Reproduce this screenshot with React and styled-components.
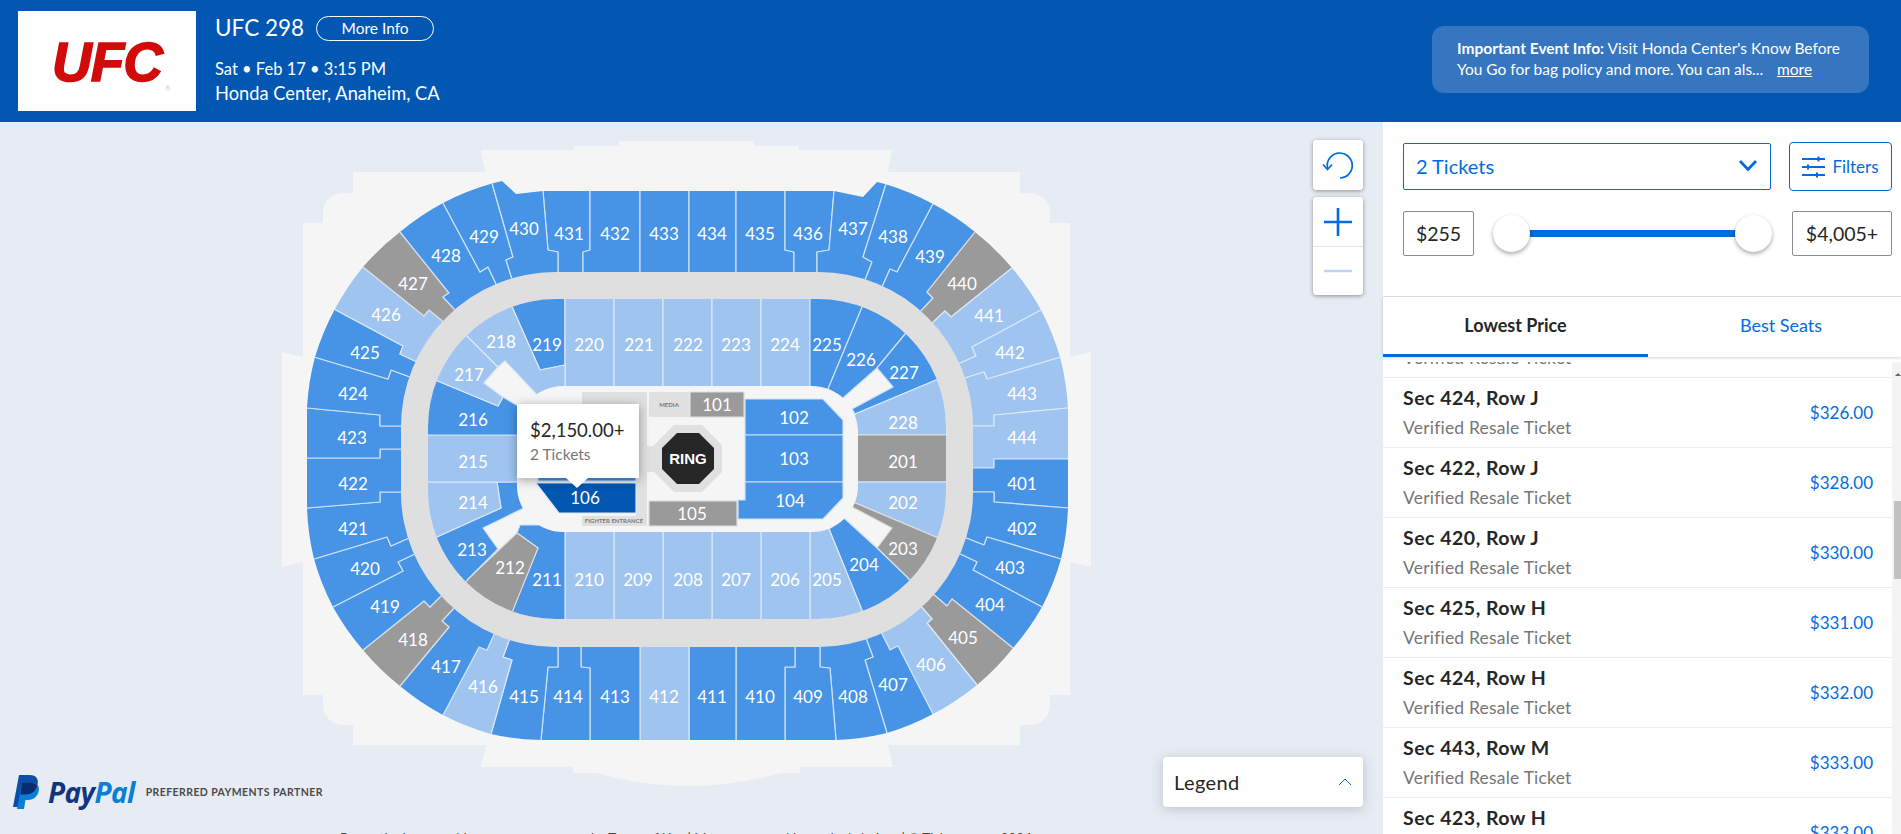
import React from 'react'
import styled, { createGlobalStyle } from 'styled-components'

const GlobalStyle = createGlobalStyle`
  html, body { margin: 0; padding: 0; height: 100%; overflow: hidden; }
  body { font-family: Lato, "Open Sans", sans-serif; color: #262626; }
  * { box-sizing: border-box; }
`

const BLUE = '#026cdf'

const TONES = {
  blue: { fill: '#4793e6', line: '#cfe1f7' },
  light: { fill: '#9fc4ef', line: '#dbe8f8' },
  grey: { fill: '#9a9a9a', line: '#dddddd' },
  active: { fill: '#0257b3', line: '#dbe8f8' },
}

/* ---------- map data, all in page coordinates ---------- */

const GREY = ['427', '440', '405', '418', '212', '203', '201', '105', '101']
const LIGHT = ['426', '441', '442', '443', '444', '406', '416', '412', '217', '218', '220', '221', '222', '223', '224', '228', '202', '205', '206', '207', '208', '209', '210', '214', '215']
const toneOf = (name) => (name === '106' ? 'active' : GREY.includes(name) ? 'grey' : LIGHT.includes(name) ? 'light' : 'blue')

// borders of the 400 level, clockwise, outer end first
const UPPER_DIVIDERS = [
  ['431', [[543, 191], [548, 250], [558, 252], [558, 272]]],
  ['432', [[590, 191], [590, 250], [583, 252], [583, 272]]],
  ['433', [[640, 191], [640, 272]]],
  ['434', [[689, 191], [689, 272]]],
  ['435', [[736, 191], [736, 272]]],
  ['436', [[785, 191], [785, 250], [794, 252], [794, 272]]],
  ['437', [[834, 191], [829, 250], [817, 252], [817, 272]]],
  ['438', [[886, 184], [863, 257], [872, 262], [865, 280]]],
  ['439', [[933, 204], [897, 272], [890, 269], [882, 287]]],
  ['440', [[975, 232], [927, 292], [933, 298], [919, 313]]],
  ['441', [[1012, 268], [951, 317], [945, 311], [931, 324]]],
  ['442', [[1041, 310], [972, 347], [976, 356], [958, 364]]],
  ['443', [[1061, 357], [987, 379], [984, 372], [965, 378]]],
  ['444', [[1068, 408], [994, 415], [994, 426], [973, 426]]],
  ['401', [[1068, 459], [994, 459], [994, 468], [973, 468]]],
  ['402', [[1068, 508], [994, 502], [994, 492], [973, 492]]],
  ['403', [[1061, 559], [987, 537], [984, 545], [966, 538]]],
  ['404', [[1042, 607], [973, 570], [977, 562], [958, 553]]],
  ['405', [[1013, 648], [952, 599], [947, 606], [932, 593]]],
  ['406', [[977, 685], [927, 623], [932, 619], [919, 604]]],
  ['407', [[933, 714], [898, 646], [890, 650], [881, 632]]],
  ['408', [[887, 733], [865, 660], [873, 657], [866, 638]]],
  ['409', [[836, 740], [830, 668], [820, 667], [820, 647]]],
  ['410', [[785, 740], [785, 667], [795, 667], [795, 647]]],
  ['411', [[736, 740], [736, 647]]],
  ['412', [[689, 740], [689, 647]]],
  ['413', [[640, 740], [640, 647]]],
  ['414', [[590, 740], [590, 668], [581, 667], [581, 647]]],
  ['415', [[541, 740], [548, 667], [558, 667], [558, 647]]],
  ['416', [[491, 734], [512, 660], [503, 657], [510, 638]]],
  ['417', [[443, 715], [479, 647], [487, 650], [495, 632]]],
  ['418', [[400, 686], [449, 627], [442, 621], [456, 606]]],
  ['419', [[363, 650], [424, 601], [430, 607], [444, 593]]],
  ['420', [[333, 607], [403, 571], [398, 562], [417, 553]]],
  ['421', [[314, 559], [387, 537], [391, 546], [409, 538]]],
  ['422', [[307, 508], [380, 502], [380, 492], [401, 492]]],
  ['423', [[307, 458], [380, 458], [380, 449], [401, 449]]],
  ['424', [[307, 408], [380, 415], [380, 426], [401, 426]]],
  ['425', [[314, 357], [388, 379], [391, 370], [410, 377]]],
  ['426', [[334, 309], [403, 346], [400, 354], [417, 362]]],
  ['427', [[363, 267], [424, 316], [429, 310], [445, 323]]],
  ['428', [[400, 232], [449, 293], [443, 297], [457, 312]]],
  ['429', [[443, 203], [480, 272], [488, 267], [497, 286]]],
  ['430', [[492, 183], [513, 257], [506, 260], [512, 279]]],
]

// each divider pushed out past the ring, so the ring clip cuts the curved ends
const stretch = (from, to, by) => {
  const dx = to[0] - from[0]
  const dy = to[1] - from[1]
  const len = Math.hypot(dx, dy)
  return [to[0] + (dx / len) * by, to[1] + (dy / len) * by]
}

const upperSections = UPPER_DIVIDERS.map(([name, line], i) => {
  const next = UPPER_DIVIDERS[(i + 1) % UPPER_DIVIDERS.length][1]
  const withEnds = (l) => [stretch(l[1], l[0], 50), ...l, stretch(l[l.length - 2], l[l.length - 1], 22)]
  return { name, points: [...withEnds(line), ...withEnds(next).reverse()] }
})

const LOWER_SECTIONS = [
  { name: '219', points: [[505, 288], [565, 288], [565, 365], [540, 370], [513, 309]] },
  { name: '220', points: [[565, 288], [614, 288], [614, 395], [565, 395]] },
  { name: '221', points: [[614, 288], [663, 288], [663, 395], [614, 395]] },
  { name: '222', points: [[663, 288], [712, 288], [712, 395], [663, 395]] },
  { name: '223', points: [[712, 288], [761, 288], [761, 395], [712, 395]] },
  { name: '224', points: [[761, 288], [810, 288], [810, 395], [761, 395]] },
  { name: '225', points: [[810, 288], [870, 288], [828, 389], [810, 395]] },
  { name: '226', points: [[870, 288], [925, 310], [877, 368], [843, 398], [828, 389]] },
  { name: '227', points: [[925, 310], [955, 372], [855, 414], [852, 409], [893, 387], [877, 368]] },
  { name: '228', points: [[855, 414], [955, 372], [960, 435], [850, 435]] },
  { name: '201', points: [[850, 435], [960, 435], [960, 482], [850, 482]] },
  { name: '202', points: [[850, 482], [960, 482], [955, 545], [853, 502]] },
  { name: '203', points: [[853, 502], [955, 545], [918, 590], [907, 577], [877, 548], [892, 528], [852, 507]] },
  { name: '204', points: [[844, 518], [877, 548], [907, 577], [918, 590], [866, 620], [829, 529]] },
  { name: '205', points: [[810, 525], [829, 529], [866, 620], [810, 630]] },
  { name: '206', points: [[761, 525], [810, 525], [810, 630], [761, 630]] },
  { name: '207', points: [[712, 525], [761, 525], [761, 630], [712, 630]] },
  { name: '208', points: [[663, 525], [712, 525], [712, 630], [663, 630]] },
  { name: '209', points: [[614, 525], [663, 525], [663, 630], [614, 630]] },
  { name: '210', points: [[565, 525], [614, 525], [614, 630], [565, 630]] },
  { name: '211', points: [[520, 525], [565, 525], [565, 630], [505, 630], [513, 608], [538, 548], [517, 533]] },
  { name: '212', points: [[517, 533], [538, 548], [505, 630], [455, 590], [469, 578]] },
  { name: '213', points: [[425, 542], [439, 536], [501, 508], [497, 482], [525, 482], [526, 507], [483, 528], [498, 549], [469, 578], [450, 600]] },
  { name: '214', points: [[415, 482], [497, 482], [501, 508], [439, 536], [425, 542]] },
  { name: '215', points: [[415, 435], [525, 435], [525, 482], [415, 482]] },
  { name: '216', points: [[415, 435], [425, 376], [440, 382], [498, 406], [503, 397], [525, 410], [525, 435]] },
  { name: '217', points: [[425, 376], [458, 327], [470, 339], [498, 367], [484, 383], [503, 397], [498, 406], [440, 382]] },
  { name: '218', points: [[458, 327], [505, 288], [513, 309], [540, 370], [565, 365], [565, 395], [537, 395], [505, 361], [498, 367]] },
]

const CENTER_SECTIONS = [
  { name: '107', tone: 'blue', points: [[538, 405], [636, 405], [636, 481], [538, 481]] },
  { name: '106', points: [[536, 483], [636, 483], [636, 513], [559, 513]] },
  { name: '101', points: [[690, 392], [744, 392], [744, 417], [690, 417]] },
  { name: '102', points: [[745, 399], [823, 399], [843, 420], [843, 435], [745, 435]] },
  { name: '103', points: [[745, 435], [843, 435], [843, 482], [745, 482]] },
  { name: '104', points: [[745, 482], [843, 482], [843, 498], [823, 519], [738, 519], [738, 500], [745, 500]] },
  { name: '105', points: [[649, 501], [737, 501], [737, 526], [649, 526]] },
]

const LABELS = {
  423: [352, 437], 424: [353, 393], 425: [365, 352], 426: [386, 314], 427: [413, 283], 428: [446, 255], 429: [484, 236], 430: [524, 228], 431: [569, 233], 432: [615, 233], 433: [664, 233],
  434: [712, 233], 435: [760, 233], 436: [808, 233], 437: [853, 228], 438: [893, 236], 439: [930, 256], 440: [962, 283], 441: [989, 315], 442: [1010, 352], 443: [1022, 393], 444: [1022, 437],
  401: [1022, 483], 402: [1022, 528], 403: [1010, 567], 404: [990, 604], 405: [963, 637], 406: [931, 664], 407: [893, 684], 408: [853, 696], 409: [808, 696], 410: [760, 696], 411: [712, 696],
  412: [664, 696], 413: [615, 696], 414: [568, 696], 415: [524, 696], 416: [483, 686], 417: [446, 666], 418: [413, 639], 419: [385, 606], 420: [365, 568], 421: [353, 528], 422: [353, 483],
  216: [473, 419], 217: [469, 374], 218: [501, 341], 219: [547, 344], 220: [589, 344], 221: [639, 344], 222: [688, 344], 223: [736, 344], 224: [785, 344], 225: [827, 344], 226: [861, 359], 227: [904, 372], 228: [903, 422],
  201: [903, 461], 202: [903, 502], 203: [903, 548], 204: [864, 564], 205: [827, 579], 206: [785, 579], 207: [736, 579], 208: [688, 579], 209: [638, 579], 210: [589, 579], 211: [547, 579], 212: [510, 567], 213: [472, 549], 214: [473, 502], 215: [473, 461],
  101: [717, 404], 102: [794, 417], 103: [794, 458], 104: [790, 500], 105: [692, 513], 106: [585, 497],
}

const roundedRect = (x1, y1, x2, y2, r) =>
  `M${x1 + r} ${y1}H${x2 - r}A${r} ${r} 0 0 1 ${x2} ${y1 + r}V${y2 - r}A${r} ${r} 0 0 1 ${x2 - r} ${y2}H${x1 + r}A${r} ${r} 0 0 1 ${x1} ${y2 - r}V${y1 + r}A${r} ${r} 0 0 1 ${x1 + r} ${y1}Z`

const UPPER_OUTLINE = `M543 191L516 194L502 181L492 183.5A250 250 0 0 0 443 203A250 250 0 0 0 400 232A250 250 0 0 0 363 267A250 250 0 0 0 335 309A250 250 0 0 0 315 357A250 250 0 0 0 307 407V508
  A250 250 0 0 0 314 559A250 250 0 0 0 333 607A250 250 0 0 0 363 650A250 250 0 0 0 400 686A250 250 0 0 0 443 715A250 250 0 0 0 491 734A250 250 0 0 0 541 740H836
  A250 250 0 0 0 887 733A250 250 0 0 0 933 714A250 250 0 0 0 977 685A250 250 0 0 0 1013 648A250 250 0 0 0 1042 607A250 250 0 0 0 1061 559A250 250 0 0 0 1068 508V408
  A250 250 0 0 0 1060 357A250 250 0 0 0 1041 310A250 250 0 0 0 1012 268A250 250 0 0 0 975 232A250 250 0 0 0 933 204A250 250 0 0 0 885 184L877 182L863 197L834 191Z`

const VENUE = `M481 150H574V146H619V141H754V146H799V150H892L888 172H1020V193H1030A20 20 0 0 1 1050 213V223H1070V357L1091 352V567L1070 562V695H1050V705A20 20 0 0 1 1030 725H1020V745H888L893 767H800V773H781
  Q687 799 596 773H573V767H481L486 745H353V725H343A20 20 0 0 1 323 705V695H303V562L282 567V352L303 357V223H323V213A20 20 0 0 1 343 193H353V172H485Z`

const CONCOURSE = roundedRect(401, 272, 973, 647, 155)
const LOWER_OUTER = roundedRect(428, 299, 946, 619, 128)
const LOWER_INNER = roundedRect(517, 386, 858, 532, 46)

/* ---------- page ---------- */

const Page = styled.div`
  width: 1901px;
  height: 834px;
  display: flex;
  flex-direction: column;
  overflow: hidden;
  background: #fff;
`

const Header = styled.header`
  height: 122px;
  flex: none;
  display: flex;
  align-items: center;
  justify-content: space-between;
  padding: 0 32px 4px 18px;
  background: #0257b3;
  color: #fff;
`

const EventSide = styled.div`
  display: flex;
  align-items: center;
  gap: 19px;
`

const LogoBox = styled.div`
  position: relative;
  width: 178px;
  height: 100px;
  margin-top: 4px;
  background: #fff;
  display: flex;
  align-items: center;
  justify-content: center;
`

const LogoWord = styled.span`
  font-family: "Liberation Sans", Arial, sans-serif;
  font-size: 55px;
  line-height: 1;
  font-weight: 700;
  font-style: italic;
  color: #d10a0a;
  -webkit-text-stroke: 1.5px #d10a0a;
  letter-spacing: -1px;
  margin-top: 3px;
`

const LogoMark = styled.span`
  position: absolute;
  left: 147px;
  top: 73px;
  font-size: 7px;
  color: #ccc;
`

const EventText = styled.div`
  display: flex;
  flex-direction: column;
  padding-top: 2px;
`

const TitleRow = styled.div`
  display: flex;
  align-items: center;
  gap: 12px;
  margin-bottom: 16px;
`

const EventTitle = styled.h1`
  margin: 0;
  font-size: 22.5px;
  line-height: 26px;
  font-weight: 400;
`

const MoreInfo = styled.button`
  width: 118px;
  height: 25px;
  padding: 0;
  border: 1px solid #fff;
  border-radius: 13px;
  background: transparent;
  color: #fff;
  font: 400 15.5px Lato, sans-serif;
`

const EventLine = styled.div`
  font-size: ${(p) => p.$size}px;
  line-height: 24px;
`

const InfoBox = styled.div`
  width: 437px;
  height: 67px;
  margin-top: 1px;
  padding: 12px 10px 0 25px;
  border-radius: 12px;
  background: #3675c0;
  font-size: 15.5px;
  line-height: 21px;
`

const InfoStrong = styled.strong`
  font-weight: 700;
`

const MoreLink = styled.a`
  margin-left: 14px;
  color: #fff;
  text-decoration: underline;
`

const Body = styled.div`
  flex: 1;
  min-height: 0;
  display: flex;
`

const MapPanel = styled.main`
  position: relative;
  width: 1383px;
  flex: none;
  overflow: hidden;
  background: #e7ebf3;
`

const MapCanvas = styled.svg`
  display: block;
  width: 1383px;
  height: 712px;
`

const Section = styled.polygon`
  fill: ${(p) => TONES[p.$tone].fill};
  stroke: ${(p) => TONES[p.$tone].line};
  stroke-width: 1.2;
  stroke-linejoin: round;
`

const SectionLabel = styled.text`
  font-family: Lato, sans-serif;
  font-size: 17px;
  fill: #fff;
  text-anchor: middle;
  dominant-baseline: central;
`

const TinyLabel = styled.text`
  font-family: Lato, sans-serif;
  font-size: 6px;
  font-weight: 700;
  fill: #777;
  text-anchor: middle;
  dominant-baseline: central;
`

const RingLabel = styled.text`
  font-family: "Liberation Sans", Arial, sans-serif;
  font-size: 15px;
  font-weight: 700;
  fill: #fff;
  text-anchor: middle;
  dominant-baseline: central;
`

const MapTooltip = styled.div`
  position: absolute;
  left: 517px;
  top: 282px;
  width: 122px;
  height: 74px;
  padding: 15px 0 0 13px;
  background: #fff;
  box-shadow: 0 2px 10px rgba(0, 0, 0, 0.35);
  &::after {
    content: "";
    position: absolute;
    left: 49px;
    bottom: -10px;
    border-left: 11px solid transparent;
    border-right: 11px solid transparent;
    border-top: 10px solid #fff;
  }
`

const TooltipPrice = styled.div`
  font-size: 18.5px;
  line-height: 22px;
`

const TooltipCount = styled.div`
  margin-top: 4px;
  font-size: 15.5px;
  line-height: 18px;
  color: #767676;
`

const MapControls = styled.div`
  position: absolute;
  left: 1313px;
  top: 18px;
  display: flex;
  flex-direction: column;
  gap: 7px;
`

const ControlGroup = styled.div`
  width: 50px;
  border-radius: 4px;
  background: #fff;
  box-shadow: 0 1px 4px rgba(0, 0, 0, 0.4);
  overflow: hidden;
`

const ControlButton = styled.button`
  display: flex;
  align-items: center;
  justify-content: center;
  width: 50px;
  height: ${(p) => p.$h}px;
  padding: 0;
  border: 0;
  border-top: ${(p) => (p.$split ? '1px solid #e4e4e4' : '0')};
  background: #fff;
`

const Legend = styled.div`
  position: absolute;
  left: 1163px;
  top: 635px;
  width: 200px;
  height: 50px;
  padding: 0 11px;
  display: flex;
  align-items: center;
  justify-content: space-between;
  border-radius: 4px;
  background: #fff;
  box-shadow: 0 2px 12px rgba(60, 70, 100, 0.25);
  font-size: 20px;
  letter-spacing: 0.4px;
`

const PartnerBadge = styled.div`
  position: absolute;
  left: 12px;
  top: 653px;
  display: flex;
  align-items: center;
`

const PayPalWord = styled.span`
  margin-left: 8px;
  font-family: "Open Sans", sans-serif;
  font-size: 28px;
  line-height: 32px;
  font-weight: 700;
  font-style: italic;
  letter-spacing: -0.6px;
  color: #12357f;
`

const PayPalTail = styled.span`
  color: #0a7fd6;
`

const PartnerText = styled.span`
  margin-left: 11px;
  font-size: 10.5px;
  font-weight: 700;
  letter-spacing: 0.42px;
  color: #4a4a4a;
`

const LegalLine = styled.div`
  position: absolute;
  left: 340px;
  top: 708px;
  width: 700px;
  font-size: 13.300px;
  line-height: 16px;
  white-space: nowrap;
  color: #444;
`

const Sidebar = styled.aside`
  flex: 1;
  min-width: 0;
  display: flex;
  flex-direction: column;
  background: #fff;
`

const FilterArea = styled.div`
  height: 175px;
  flex: none;
  padding: 20px 9px 0 20px;
  border-bottom: 1px solid #e4e4e4;
`

const SelectRow = styled.div`
  display: flex;
  align-items: center;
  gap: 18px;
`

const TicketSelect = styled.div`
  width: 368px;
  height: 47px;
  padding: 0 12px 2px 12px;
  display: flex;
  align-items: center;
  justify-content: space-between;
  border: 1px solid ${BLUE};
  border-radius: 2px;
  color: ${BLUE};
  font-size: 20px;
`

const FiltersButton = styled.button`
  width: 103px;
  height: 49px;
  padding: 0;
  display: flex;
  align-items: center;
  justify-content: center;
  gap: 7px;
  border: 1px solid ${BLUE};
  border-radius: 4px;
  background: #fff;
  color: ${BLUE};
  font: 400 17px Lato, sans-serif;
`

const PriceRow = styled.div`
  margin-top: 20px;
  display: flex;
  align-items: center;
`

const PriceBox = styled.div`
  width: ${(p) => p.$w}px;
  height: 45px;
  flex: none;
  display: flex;
  align-items: center;
  justify-content: center;
  border: 1px solid #8c8c8c;
  border-radius: 2px;
  font-size: 19.5px;
`

const SliderTrack = styled.div`
  position: relative;
  width: 243px;
  height: 7px;
  margin: 0 38px 0 37px;
  background: #026cdf;
`

const SliderThumb = styled.span`
  position: absolute;
  top: -15px;
  ${(p) => (p.$end ? 'right: -18px;' : 'left: -18px;')}
  width: 37px;
  height: 37px;
  border-radius: 50%;
  background: #fff;
  box-shadow: 0 2px 4px rgba(0, 0, 0, 0.35);
`

const Tabs = styled.div`
  height: 60px;
  flex: none;
  display: flex;
  box-shadow: 0 1px 3px rgba(0, 0, 0, 0.18);
  position: relative;
`

const Tab = styled.div`
  width: ${(p) => (p.$active ? '265px' : 'auto')};
  flex: ${(p) => (p.$active ? 'none' : '1')};
  display: flex;
  align-items: center;
  justify-content: center;
  padding: 0 0 2px ${(p) => (p.$active ? '0' : '13px')};
  border-bottom: 3px solid ${(p) => (p.$active ? BLUE : 'transparent')};
  color: ${(p) => (p.$active ? '#262626' : BLUE)};
  font-size: 18px;
  font-weight: ${(p) => (p.$active ? 700 : 400)};
`

const ListArea = styled.div`
  flex: 1;
  min-height: 0;
  margin-top: 5px;
  display: flex;
  overflow: hidden;
`

const ListColumn = styled.div`
  flex: 1;
  min-width: 0;
  margin-top: -54px;
`

const Row = styled.div`
  height: 70px;
  padding: 8px 19px 0 20px;
  display: flex;
  justify-content: space-between;
  border-bottom: 1.5px solid #ececec;
`

const RowTitle = styled.div`
  font-size: 19.5px;
  line-height: 24px;
  font-weight: 700;
  letter-spacing: 0.5px;
`

const RowSub = styled.div`
  margin-top: 7px;
  font-size: 17.5px;
  line-height: 22px;
  letter-spacing: 0.2px;
  color: #767676;
`

const RowPrice = styled.div`
  margin-top: 16px;
  font-size: 17px;
  line-height: 22px;
  color: ${BLUE};
`

const ScrollTrack = styled.div`
  position: relative;
  width: 9px;
  padding: 139px 0 0 2px;
  background: #f3f3f3;
  &::before {
    content: "";
    position: absolute;
    left: 3px;
    top: 11px;
    border-left: 3px solid transparent;
    border-right: 3px solid transparent;
    border-bottom: 3px solid #666;
  }
`

const ScrollThumb = styled.div`
  height: 78px;
  background: #c1c1c1;
`

const ROWS = [
  ['Sec 426, Row K', '$325.00'],
  ['Sec 424, Row J', '$326.00'],
  ['Sec 422, Row J', '$328.00'],
  ['Sec 420, Row J', '$330.00'],
  ['Sec 425, Row H', '$331.00'],
  ['Sec 424, Row H', '$332.00'],
  ['Sec 443, Row M', '$333.00'],
  ['Sec 423, Row H', '$333.00'],
]

function VenueMap() {
  return (
    <MapCanvas viewBox="0 122 1383 712">
      <defs>
        <clipPath id="upper-ring">
          <path clipRule="evenodd" d={`${UPPER_OUTLINE}${CONCOURSE}`} />
        </clipPath>
        <clipPath id="lower-ring">
          <path clipRule="evenodd" d={`${LOWER_OUTER}${LOWER_INNER}`} />
        </clipPath>
      </defs>

      <path d={VENUE} fill="#f5f5f5" />
      <path d={CONCOURSE} fill="#dfdfdf" />
      <path d={LOWER_OUTER} fill="#f5f5f5" />

      <g clipPath="url(#upper-ring)">
        {upperSections.map((s) => (
          <Section key={s.name} $tone={toneOf(s.name)} points={s.points.join(' ')} />
        ))}
      </g>
      <g clipPath="url(#lower-ring)">
        {LOWER_SECTIONS.map((s) => (
          <Section key={s.name} $tone={toneOf(s.name)} points={s.points.join(' ')} />
        ))}
      </g>

      {/* floor */}
      <path d="M582 392H647V526H582V516H636V405H582Z" fill="#e0e0e0" />
      <rect x="649" y="392" width="40" height="25" fill="#e0e0e0" />
      <rect x="647" y="446" width="18" height="26" fill="#e0e0e0" />
      <polygon points="674,425 702,425 722,445 722,472 702,492 674,492 654,472 654,445" fill="#e0e0e0" />
      <polygon points="677,433 699,433 714,448 714,469 699,484 677,484 662,469 662,448" fill="#262626" />
      {CENTER_SECTIONS.map((s) => (
        <Section key={s.name} $tone={s.tone || toneOf(s.name)} points={s.points.join(' ')} />
      ))}

      {Object.entries(LABELS).map(([name, [x, y]]) => (
        <SectionLabel key={name} x={x} y={y}>{name}</SectionLabel>
      ))}
      <TinyLabel x="669" y="404.5">MEDIA</TinyLabel>
      <TinyLabel x="614" y="520.5">FIGHTER ENTRANCE</TinyLabel>
      <RingLabel x="688" y="458.5">RING</RingLabel>
    </MapCanvas>
  )
}

function PayPalMark() {
  return (
    <svg width="28" height="34" viewBox="0 0 28 34">
      <path d="M7 1H18C24 1 27 5 25.500 11C24 17 20 20 14 20H10L8 33H1Z" fill="#0a4ea8" transform="translate(0 -1)" />
      <path d="M10 8H20C26 8 28 12 26.500 17C25 22 21 25 16 25H13.500L12 34H5Z" fill="#0a7fd6" />
      <path d="M10 8H20C22 8 24 9 25 10.500C24 16 20 19.500 14 19.500H8.500Z" fill="#0b2a70" />
    </svg>
  )
}

export default function App() {
  return (
    <Page>
      <GlobalStyle />

      <Header>
        <EventSide>
          <LogoBox>
            <LogoWord>UFC</LogoWord>
            <LogoMark>®</LogoMark>
          </LogoBox>
          <EventText>
            <TitleRow>
              <EventTitle>UFC 298</EventTitle>
              <MoreInfo>More Info</MoreInfo>
            </TitleRow>
            <EventLine $size={16.5}>Sat • Feb 17 • 3:15 PM</EventLine>
            <EventLine $size={18.3}>Honda Center, Anaheim, CA</EventLine>
          </EventText>
        </EventSide>
        <InfoBox>
          <InfoStrong>Important Event Info:</InfoStrong> Visit Honda Center's Know Before You Go for bag policy and more. You can als...
          <MoreLink>more</MoreLink>
        </InfoBox>
      </Header>

      <Body>
        <MapPanel>
          <VenueMap />

          <MapTooltip>
            <TooltipPrice>$2,150.00+</TooltipPrice>
            <TooltipCount>2 Tickets</TooltipCount>
          </MapTooltip>

          <MapControls>
            <ControlGroup>
              <ControlButton $h={50}>
                <svg width="50" height="50" viewBox="0 0 50 50" fill="none" stroke={BLUE} strokeWidth="1.7">
                  <path d="M27 38A12.500 12.500 0 1 0 14.500 28" />
                  <path d="M10 24.500L14.500 29.500L19 24.500" />
                </svg>
              </ControlButton>
            </ControlGroup>
            <ControlGroup>
              <ControlButton $h={49}>
                <svg width="30" height="30" viewBox="0 0 30 30" fill="none" stroke={BLUE} strokeWidth="2.600">
                  <path d="M1 15H29M15 1V29" />
                </svg>
              </ControlButton>
              <ControlButton $h={49} $split>
                <svg width="30" height="6" viewBox="0 0 30 6" fill="none" stroke="#bcd6f5" strokeWidth="2.600">
                  <path d="M1 3H29" />
                </svg>
              </ControlButton>
            </ControlGroup>
          </MapControls>

          <Legend>
            Legend
            <svg width="14" height="8" viewBox="0 0 14 8" fill="none" stroke={BLUE} strokeWidth="1">
              <path d="M1 7L7 1L13 7" />
            </svg>
          </Legend>

          <PartnerBadge>
            <PayPalMark />
            <PayPalWord>Pay<PayPalTail>Pal</PayPalTail></PayPalWord>
            <PartnerText>PREFERRED PAYMENTS PARTNER</PartnerText>
          </PartnerBadge>

          <LegalLine>By continuing past this page, you agree to the Terms of Use | Manage my cookies and ad choices | © Ticketmaster 2024</LegalLine>
        </MapPanel>

        <Sidebar>
          <FilterArea>
            <SelectRow>
              <TicketSelect>
                2 Tickets
                <svg width="20" height="13" viewBox="0 0 20 13" fill="none" stroke={BLUE} strokeWidth="2.800">
                  <path d="M2 2L10 10.500L18 2" />
                </svg>
              </TicketSelect>
              <FiltersButton>
                <svg width="23" height="23" viewBox="0 0 23 23" fill="none" stroke={BLUE} strokeWidth="1.800">
                  <path d="M0 4H23M0 12H23M0 20H23" />
                  <path d="M16.500 1.500V6.500M6 9.500V14.500M15 17.500V22.500" strokeWidth="2" />
                </svg>
                Filters
              </FiltersButton>
            </SelectRow>
            <PriceRow>
              <PriceBox $w={71}>$255</PriceBox>
              <SliderTrack>
                <SliderThumb />
                <SliderThumb $end />
              </SliderTrack>
              <PriceBox $w={100}>$4,005+</PriceBox>
            </PriceRow>
          </FilterArea>

          <Tabs>
            <Tab $active>Lowest Price</Tab>
            <Tab>Best Seats</Tab>
          </Tabs>

          <ListArea>
            <ListColumn>
              {ROWS.map(([title, price]) => (
                <Row key={title}>
                  <div>
                    <RowTitle>{title}</RowTitle>
                    <RowSub>Verified Resale Ticket</RowSub>
                  </div>
                  <RowPrice>{price}</RowPrice>
                </Row>
              ))}
            </ListColumn>
            <ScrollTrack>
              <ScrollThumb />
            </ScrollTrack>
          </ListArea>
        </Sidebar>
      </Body>
    </Page>
  )
}
